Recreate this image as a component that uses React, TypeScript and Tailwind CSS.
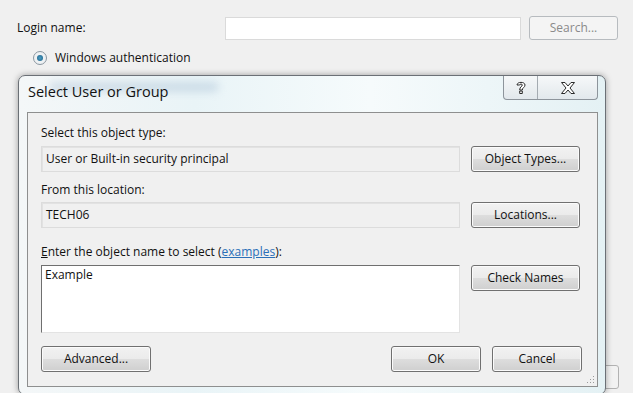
import React from "react";

const font = { fontFamily: '"Open Sans", "Noto Sans", sans-serif' };

function WinButton({ label, w, disabled }: { label: React.ReactNode; w: string; disabled?: boolean }) {
  if (disabled) {
    return (
      <div
        className={`${w} flex h-[24px] items-center justify-center rounded-[3px] border border-[#b7bbbf] bg-[#f4f4f4] text-[12px] text-[#8a8a8a]`}
      >
        {label}
      </div>
    );
  }
  return (
    <div
      className={`${w} flex h-[26px] shrink-0 items-center justify-center rounded-[3px] border border-[#707070] bg-[linear-gradient(#f2f2f2_0%,#ebebeb_48%,#dddddd_52%,#cfcfcf_100%)] text-[12px] text-[#111] shadow-[inset_0_0_0_1px_#fbfbfb]`}
    >
      {label}
    </div>
  );
}

function ReadOnlyField({ value }: { value: string }) {
  return (
    <div className="flex h-[26px] w-[419px] items-center border border-[#dcdcdc] bg-[#f0f0f0] pl-[4px] text-[12px] text-[#111] shadow-[inset_1px_1px_0_#e2e2e2]">
      {value}
    </div>
  );
}

export default function App() {
  return (
    <div className="relative h-[393px] w-[633px] overflow-hidden bg-[#f0f0f0] text-[#111]" style={font}>
      {/* background window */}
      <div className="flex items-center pl-[17px] pt-[16px]">
        <span className="w-[208px] text-[12px]">Login name:</span>
        <div className="h-[23px] w-[296px] border border-[#dadada] bg-white" />
        <div className="ml-[8px]">
          <WinButton label="Search..." w="w-[89px]" disabled />
        </div>
      </div>
      <div className="mt-[9px] flex items-center pl-[33px]">
        <div className="flex h-[14px] w-[14px] items-center justify-center rounded-full border border-[#8a96a0] bg-[#eef1f3]">
          <div className="h-[6px] w-[6px] rounded-full bg-[radial-gradient(circle,#4a9ec4,#1d5f85)]" />
        </div>
        <span className="ml-[8px] text-[12px]">Windows authentication</span>
      </div>

      {/* partly hidden button behind dialog */}
      <div className="absolute left-[560px] top-[365px] z-0 h-[24px] w-[59px] rounded-[3px] border border-[#b2b2b2] bg-[#f2f2f2]" />

      {/* dialog */}
      <div className="relative z-10 ml-[18px] mt-[8px] h-[320px] w-[588px] rounded-[7px] border border-[#6b7076] bg-[linear-gradient(90deg,#f4f7f8_0%,#e9f4f7_30%,#f6fbfc_60%,#e4f1f4_100%)] shadow-[0_0_6px_rgba(0,0,0,0.35)]">
        <div className="absolute left-[30px] top-[6px] h-[10px] w-[170px] rounded-full bg-[#9fb8d0] opacity-40 blur-[4px]" />
        <div className="relative flex h-[36px] items-start">
          <span className="ml-[9px] mt-[5px] text-[14.5px] text-[#111]">Select User or Group</span>
          <div className="ml-auto mr-[7px] flex h-[24px] overflow-hidden rounded-b-[4px] border border-t-0 border-[#8d949b] bg-[linear-gradient(#f6f8f9,#e2e8ec)]">
            <div className="flex w-[34px] items-center justify-center border-r border-[#a4abb1]">
              <svg width="12" height="15" viewBox="0 0 12 15">
                <path
                  d="M2 5 C2 1.5 10 1.5 10 5 C10 7.5 7.3 7.5 7.3 10 L4.7 10 C4.7 6.5 7.3 6.7 7.3 5 C7.3 3.7 4.7 3.7 4.7 5 Z M4.7 11 L7.3 11 L7.3 13.5 L4.7 13.5 Z"
                  fill="#fff"
                  stroke="#2a2a2a"
                  strokeWidth="1"
                  strokeLinejoin="round"
                />
              </svg>
            </div>
            <div className="flex w-[59px] items-center justify-center">
              <svg width="16" height="14" viewBox="0 0 16 14">
                <path
                  d="M1.5 1.5 L5 1.5 L8 5 L11 1.5 L14.5 1.5 L10 7 L14.5 12.5 L11 12.5 L8 9 L5 12.5 L1.5 12.5 L6 7 Z"
                  fill="#fff"
                  stroke="#2a2a2a"
                  strokeWidth="1"
                  strokeLinejoin="round"
                />
              </svg>
            </div>
          </div>
        </div>

        {/* client area */}
        <div className="relative ml-[8px] mr-[7px] flex h-[275px] flex-col border border-[#8e8f8f] bg-[#f0f0f0] pl-[13px] pr-[15px] pt-[12px]">
          <span className="h-[16px] text-[12px] leading-[16px]">Select this object type:</span>
          <div className="mt-[5px] flex items-center gap-[11px]">
            <ReadOnlyField value="User or Built-in security principal" />
            <WinButton label="Object Types..." w="w-[109px]" />
          </div>
          <span className="mt-[10px] h-[16px] text-[12px] leading-[16px]">From this location:</span>
          <div className="mt-[4px] flex items-center gap-[11px]">
            <ReadOnlyField value="TECH06" />
            <WinButton label="Locations..." w="w-[109px]" />
          </div>
          <span className="mt-[16px] h-[16px] text-[12px] leading-[16px]">
            <span className="underline">E</span>nter the object name to select (
            <span className="text-[#2a6fb8] underline">examples</span>):
          </span>
          <div className="mt-[5px] flex items-start gap-[11px]">
            <div className="h-[68px] w-[419px] border border-[#e3e3e3] border-l-[#6f6f6f] border-t-[#6f6f6f] bg-white pl-[3px] pt-[1px] text-[12px] leading-[16px]">
              Example
            </div>
            <WinButton label="Check Names" w="w-[109px]" />
          </div>
          <div className="mt-[13px] flex items-center">
            <WinButton label="Advanced..." w="w-[110px]" />
            <div className="ml-auto flex gap-[11px]">
              <WinButton label="OK" w="w-[90px]" />
              <WinButton label="Cancel" w="w-[90px]" />
            </div>
          </div>
          <svg className="absolute bottom-[2px] right-[2px]" width="10" height="10" viewBox="0 0 10 10">
            <rect x="8" y="2" width="1" height="1" fill="#9a9a9a" />
            <rect x="5" y="5" width="1" height="1" fill="#9a9a9a" />
            <rect x="8" y="5" width="1" height="1" fill="#9a9a9a" />
            <rect x="2" y="8" width="1" height="1" fill="#9a9a9a" />
            <rect x="5" y="8" width="1" height="1" fill="#9a9a9a" />
            <rect x="8" y="8" width="1" height="1" fill="#9a9a9a" />
          </svg>
        </div>
      </div>
    </div>
  );
}
